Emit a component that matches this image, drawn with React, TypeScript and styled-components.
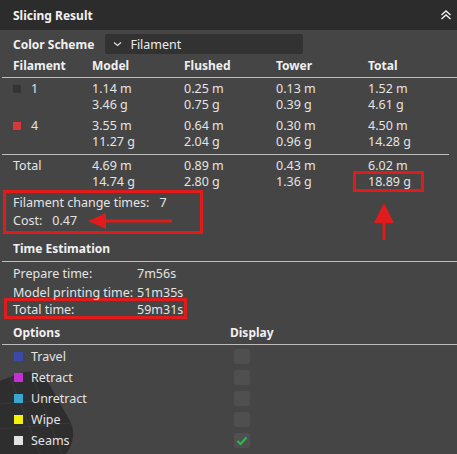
import React from 'react'
import styled, { createGlobalStyle } from 'styled-components'

const GlobalStyle = createGlobalStyle`
  html, body {
    margin: 0;
    padding: 0;
    background: #454545;
  }
  body {
    font-family: 'Noto Sans', 'Open Sans', sans-serif;
    font-size: 12.5px;
    color: #e4e4e4;
  }
`

const Panel = styled.div`
  position: relative;
  width: 457px;
  height: 454px;
  background: #454545;
  overflow: hidden;
`

const TitleBar = styled.div`
  height: 30px;
  background: #2c2c2c;
  display: flex;
  align-items: center;
  justify-content: space-between;
  padding: 0 5px 0 13px;
`

const Title = styled.div`
  font-weight: 700;
  font-size: 12px;
  color: #f2f2f2;
`

const Body = styled.div`
  position: relative;
  z-index: 1;
  white-space: nowrap;
`

const SchemeRow = styled.div`
  display: flex;
  align-items: center;
  height: 20px;
  margin-top: 4px;
  padding-left: 13px;
  gap: 11px;
`

const Bold = styled.div`
  font-weight: 700;
  font-size: 12px;
  color: #f0f0f0;
`

const Select = styled.div`
  width: 198px;
  height: 20px;
  background: #323232;
  border-radius: 3px;
  display: flex;
  align-items: center;
  gap: 8px;
  padding-left: 8px;
  box-sizing: border-box;
  color: #ececec;
`

const TableGrid = styled.div`
  display: grid;
  grid-template-columns: 79px 92px 92px 92px auto;
  padding-left: 13px;
`

const HeadRow = styled(TableGrid)`
  height: 23px;
  align-items: center;
  border-bottom: 1px solid #bdbdbd;
  margin-left: 2px;
  padding-left: 11px;
  font-weight: 700;
  font-size: 12px;
  color: #f0f0f0;
`

const DataRow = styled(TableGrid)<{ $top: number; $divider?: boolean }>`
  margin-top: ${(p) => p.$top}px;
  line-height: 16px;
  ${(p) =>
    p.$divider
      ? 'border-bottom: 1px solid #bdbdbd; padding-bottom: 4px; margin-left: 2px; margin-right: 8px; padding-left: 11px;'
      : ''}
`

const FilCell = styled.div`
  display: flex;
  align-items: flex-start;
  gap: 10px;
`

const Swatch = styled.span<{ $color: string; $size?: number; $top?: number }>`
  display: inline-block;
  width: ${(p) => p.$size ?? 8}px;
  height: ${(p) => p.$size ?? 8}px;
  background: ${(p) => p.$color};
  margin-top: ${(p) => p.$top ?? 4}px;
  flex-shrink: 0;
`

const Stack = styled.div`
  display: flex;
  flex-direction: column;
`

// highlighted value: the red frame sits around the text without taking layout space
const Boxed = styled.span`
  position: relative;

  &::after {
    content: '';
    position: absolute;
    left: -15px;
    top: -3px;
    width: 71px;
    height: 21px;
    box-sizing: border-box;
    border: 3px solid #e01b1b;
  }
`

const StatsBox = styled.div`
  margin-left: 3px;
  width: 200px;
  height: 44px;
  border: 3px solid #e01b1b;
  box-sizing: border-box;
  padding: 1px 0 0 7px;
  line-height: 18px;
`

const StatLine = styled.div`
  display: flex;
  gap: 10px;
`

const Section = styled.div<{ $top: number; $pad: number }>`
  margin-top: ${(p) => p.$top}px;
  margin-left: 2px;
  padding: 0 0 ${(p) => p.$pad}px 11px;
  border-bottom: 1px solid #bdbdbd;
  display: grid;
  grid-template-columns: 217px auto;
  font-weight: 700;
  font-size: 12px;
  color: #f0f0f0;
  line-height: 19px;
`

const TimeList = styled.div`
  padding-top: 2px;
`

const TimeRow = styled.div<{ $boxed?: boolean }>`
  display: grid;
  grid-template-columns: 124px auto;
  line-height: 19px;
  padding-left: 13px;
  ${(p) =>
    p.$boxed
      ? `margin: -4px 0 0 4px; padding: 1px 0 0 6px; width: 183px; height: 21px; border: 3px solid #e01b1b; box-sizing: border-box; line-height: 15px;`
      : ''}
`

const OptionRow = styled.div`
  display: grid;
  grid-template-columns: 220px auto;
  height: 21px;
  align-items: center;
  padding-left: 14px;
`

const OptionName = styled.div`
  display: flex;
  align-items: center;
  gap: 8px;
`

const OptionList = styled.div`
  margin-top: 1px;
`

const Check = styled.div`
  width: 16px;
  height: 15px;
  background: #4f4f4f;
  border-radius: 2px;
  display: flex;
  align-items: center;
  justify-content: center;
`

const Backdrop = styled.svg`
  position: absolute;
  left: 0;
  bottom: 0;
  z-index: 0;
`

const Overlay = styled.svg`
  position: absolute;
  left: 0;
  top: 0;
  z-index: 2;
  pointer-events: none;
`

const filaments = [
  { id: '1', color: '#333333', model: ['1.14 m', '3.46 g'], flushed: ['0.25 m', '0.75 g'], tower: ['0.13 m', '0.39 g'], total: ['1.52 m', '4.61 g'] },
  { id: '4', color: '#d9383a', model: ['3.55 m', '11.27 g'], flushed: ['0.64 m', '2.04 g'], tower: ['0.30 m', '0.96 g'], total: ['4.50 m', '14.28 g'] }
]

const options = [
  { name: 'Travel', color: '#3a4aa6', on: false },
  { name: 'Retract', color: '#c52fd6', on: false },
  { name: 'Unretract', color: '#3aa6cf', on: false },
  { name: 'Wipe', color: '#f2f20a', on: false },
  { name: 'Seams', color: '#e2e2e2', on: true }
]

const Pair = ({ v }: { v: string[] }) => (
  <Stack>
    <span>{v[0]}</span>
    <span>{v[1]}</span>
  </Stack>
)

export default function App() {
  return (
    <Panel>
      <GlobalStyle />
      {/* build plate corner showing through behind the panel */}
      <Backdrop width="90" height="95" viewBox="0 0 90 95">
        <path d="M0 22 L20 14 Q40 8 52 30 L70 62 Q78 78 66 95 L0 95 Z" fill="#2e2e2e" />
        <path d="M10 18 L40 95 M30 12 L62 95 M0 45 L58 40 M0 70 L70 64" stroke="#3a3a3a" strokeWidth="1" fill="none" />
      </Backdrop>
      <TitleBar>
        <Title>Slicing Result</Title>
        <svg width="12" height="12" viewBox="0 0 12 12">
          <path d="M1.5 6 L6 2 L10.5 6 M1.5 10 L6 6 L10.5 10" stroke="#f0f0f0" strokeWidth="1.4" fill="none" />
        </svg>
      </TitleBar>
      <Body>
        <SchemeRow>
          <Bold>Color Scheme</Bold>
          <Select>
            <svg width="9" height="6" viewBox="0 0 9 6">
              <path d="M1 1.5 L4.5 4.5 L8 1.5" stroke="#e0e0e0" strokeWidth="1.2" fill="none" />
            </svg>
            Filament
          </Select>
        </SchemeRow>
        <HeadRow>
          <span>Filament</span>
          <span>Model</span>
          <span>Flushed</span>
          <span>Tower</span>
          <span>Total</span>
        </HeadRow>
        {filaments.map((f, i) => (
          <DataRow key={f.id} $top={i === 0 ? 3 : 5} $divider={i === filaments.length - 1}>
            <FilCell>
              <Swatch $color={f.color} />
              <span>{f.id}</span>
            </FilCell>
            <Pair v={f.model} />
            <Pair v={f.flushed} />
            <Pair v={f.tower} />
            <Pair v={f.total} />
          </DataRow>
        ))}
        <DataRow $top={3}>
          <span>Total</span>
          <Pair v={['4.69 m', '14.74 g']} />
          <Pair v={['0.89 m', '2.80 g']} />
          <Pair v={['0.43 m', '1.36 g']} />
          <Stack>
            <span>6.02 m</span>
            <Boxed>18.89 g</Boxed>
          </Stack>
        </DataRow>
        <StatsBox>
          <StatLine>
            <span>Filament change times:</span>
            <span>7</span>
          </StatLine>
          <StatLine>
            <span>Cost:</span>
            <span>0.47</span>
          </StatLine>
        </StatsBox>
        <Section $top={5} $pad={3}>
          <span>Time Estimation</span>
        </Section>
        <TimeList>
          <TimeRow>
            <span>Prepare time:</span>
            <span>7m56s</span>
          </TimeRow>
          <TimeRow>
            <span>Model printing time:</span>
            <span>51m35s</span>
          </TimeRow>
          <TimeRow $boxed>
            <span>Total time:</span>
            <span>59m31s</span>
          </TimeRow>
        </TimeList>
        <Section $top={4} $pad={2}>
          <span>Options</span>
          <span>Display</span>
        </Section>
        <OptionList>
          {options.map((o) => (
            <OptionRow key={o.name}>
              <OptionName>
                <Swatch $color={o.color} $size={9} $top={0} />
                <span>{o.name}</span>
              </OptionName>
              <Check>
                {o.on && (
                  <svg width="12" height="10" viewBox="0 0 12 10">
                    <path d="M1.5 5 L4.5 8 L10.5 1.5" stroke="#2fb84f" strokeWidth="2" fill="none" />
                  </svg>
                )}
              </Check>
            </OptionRow>
          ))}
        </OptionList>
      </Body>
      {/* callout arrows */}
      <Overlay width="457" height="454" viewBox="0 0 457 454">
        <path d="M104 219.5 L172 219.5 L172 222.5 L104 222.5 Z" fill="#e01b1b" />
        <path d="M88 221 L106 213 L106 229 Z" fill="#e01b1b" />
        <path d="M382.5 220 L385.5 220 L385.5 240 L382.5 240 Z" fill="#e01b1b" />
        <path d="M384 203 L394 223 L374 223 Z" fill="#e01b1b" />
      </Overlay>
    </Panel>
  )
}
